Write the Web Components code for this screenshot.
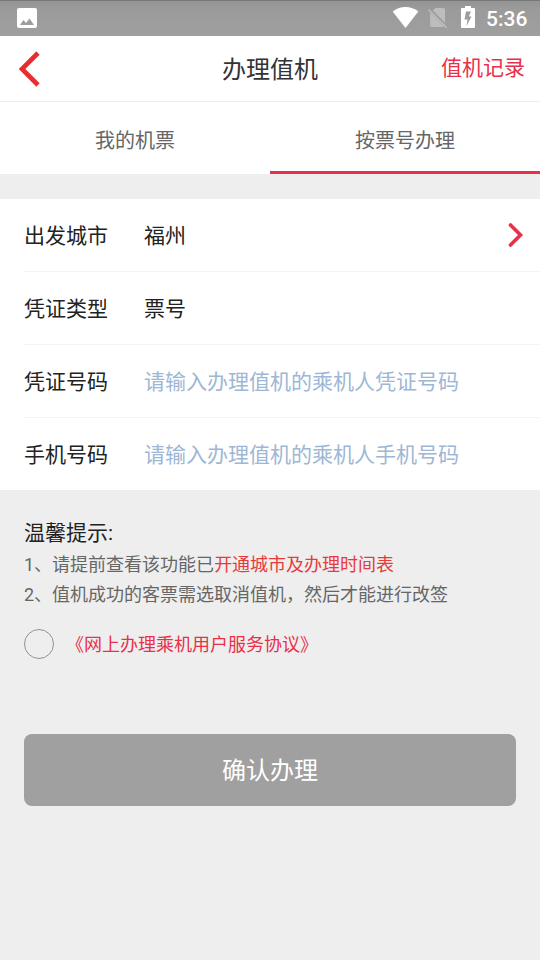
<!DOCTYPE html>
<html lang="zh-CN">
<head>
<meta charset="utf-8">
<title>办理值机</title>
<style>
html,body{margin:0;height:100%}
body{background:#eee;font-family:Roboto,"Noto Sans CJK SC",sans-serif;overflow:hidden}
</style>
</head>
<body>
<checkin-app></checkin-app>
<script>
function define(name, html) {
  const t = document.createElement('template');
  t.innerHTML = html;
  customElements.define(name, class extends HTMLElement {
    constructor() {
      super();
      this.attachShadow({ mode: 'open' }).appendChild(t.content.cloneNode(true));
    }
  });
}

define('status-bar', `
<style>
:host{display:flex;box-sizing:border-box;height:36px;padding:0 12px 0 17px;align-items:center;background:linear-gradient(#777 0,#777 1px,#949494 1px,#9b9b9b 10px,#9f9f9f 36px);color:#fff}
svg{display:block;flex:none}
.gap{flex:1}
.wifi{margin-right:9px}.sim{margin-right:13px}.bat{margin-right:11px}
span{font:500 21px/36px Roboto,sans-serif;padding-top:1px;width:42px;white-space:nowrap}
</style>
<svg width="20" height="36" viewBox="0 0 20 36"><path fill="#fff" fill-rule="evenodd" d="M2 8h16a2 2 0 0 1 2 2v16a2 2 0 0 1-2 2H2a2 2 0 0 1-2-2V10a2 2 0 0 1 2-2zM3 25h14l-4.500-6.500-3.500 4.500-2.500-3z"/></svg>
<div class="gap"></div>
<svg class="wifi" width="26" height="36" viewBox="0 0 26 36"><path fill="#fff" d="M-.3 11.500C6.500 5.500 18.500 5.500 25.300 11.500L12.500 28z"/></svg>
<svg class="sim" width="20" height="36" viewBox="0 0 20 36"><path fill="#bdbdbd" d="M7.500 8H15.500q1.500 0 1.500 1.500V23L5 10.500zM2.200 12.500L16.500 27H3.700q-1.500 0-1.500-1.500z"/><path stroke="#bdbdbd" stroke-width="1.500" d="M.5 9.500L18.700 27.700"/></svg>
<svg class="bat" width="14" height="36" viewBox="0 0 14 36"><path fill="#fff" fill-rule="evenodd" d="M4 6h6v2h3q1 0 1 1v18q0 1-1 1H1q-1 0-1-1V9q0-1 1-1h3zM5 11.500L3.500 19.500H6.500L5.500 26L10.500 16.500H7.800L10 11.500z"/></svg>
<span>5:36</span>`);

define('nav-header', `
<style>
:host{display:grid;grid-template-columns:1fr auto 1fr;align-items:center;box-sizing:border-box;height:66px;padding:0 15px 0 18px;background:#fff;border-bottom:1px solid #ededed}
svg{display:block}
h1{margin:0;padding-top:3px;font-weight:400;font-size:24px;line-height:36px;color:#333;transform:translateX(-1.500px)}
::slotted(a){justify-self:end;font-size:21px;line-height:30px;color:#e8304a;margin-bottom:2px}
</style>
<svg width="24" height="36" viewBox="0 0 24 36"><path d="M20 2L4 18L20 34" fill="none" stroke="#e72d2d" stroke-width="4.600"/></svg>
<h1>办理值机</h1><slot></slot>`);

define('tab-item', `
<style>
:host{display:flex;flex:1;box-sizing:border-box;justify-content:center;align-items:center;padding-top:8px;border-bottom:3px solid transparent;font-size:20px;line-height:30px;color:#666}
:host([active]){border-color:#e8304a}
</style><slot></slot>`);

define('tab-bar', `<style>:host{display:flex;height:72px;background:#fff}</style><slot></slot>`);

define('form-row', `
<style>
:host{display:flex;align-items:center;box-sizing:border-box;height:73px;margin-left:24px;padding:0 16px 0 0;border-bottom:1px solid #f0f3f7;font-size:21px;line-height:30px;color:#222}
:host(:last-child){height:72px;border:0}
.label,.value{padding-top:2px}
.label{width:120px}.value{flex:1}
:host([placeholder]) .value{color:#9db7d5}
svg{display:none}
:host([arrow]) svg{display:block}
</style>
<div class="label"><slot name="label"></slot></div><div class="value"><slot></slot></div>
<svg width="16" height="26" viewBox="0 0 16 26"><path d="M2.500 3L12.500 13L2.500 23" fill="none" stroke="#e8304a" stroke-width="3.600" stroke-linecap="round"/></svg>`);

define('form-list', `<style>:host{display:block;margin-top:25px;background:#fff}</style><slot></slot>`);

define('tips-note', `
<style>
:host{display:block;padding:26px 24px 0;font-size:18px;line-height:30px;color:#666}
h2{margin:0;font-weight:400;font-size:21px;line-height:34px;color:#222}
p{margin:0;white-space:nowrap}b{font-weight:400;color:#e73a3a}
</style>
<h2>温馨提示:</h2>
<p>1、请提前查看该功能已<b>开通城市及办理时间表</b></p>
<p>2、值机成功的客票需选取消值机，然后才能进行改签</p>`);

define('agreement-check', `
<style>
:host{display:flex;align-items:center;gap:12px;margin:19px 24px 0;height:30px;font-size:18px;line-height:30px;color:#e8304a}
i{box-sizing:border-box;width:30px;height:30px;border:1px solid #929292;border-radius:50%}
span{padding-top:2px}
</style><i></i><span><slot></slot></span>`);

define('submit-button', `
<style>
:host{display:block;margin:75px 24px 0}
button{display:block;width:100%;height:72px;padding:0 0 3px;border:0;border-radius:8px;background:#a0a0a0;color:#fff;font:inherit;font-size:24px}
</style><button><slot></slot></button>`);

define('checkin-app', `
<style>:host{display:flex;flex-direction:column;width:540px;height:960px;background:#eee}</style>
<status-bar></status-bar>
<nav-header><a>值机记录</a></nav-header>
<tab-bar><tab-item>我的机票</tab-item><tab-item active>按票号办理</tab-item></tab-bar>
<form-list>
<form-row arrow><span slot="label">出发城市</span>福州</form-row>
<form-row><span slot="label">凭证类型</span>票号</form-row>
<form-row placeholder><span slot="label">凭证号码</span>请输入办理值机的乘机人凭证号码</form-row>
<form-row placeholder><span slot="label">手机号码</span>请输入办理值机的乘机人手机号码</form-row>
</form-list>
<tips-note></tips-note>
<agreement-check>《网上办理乘机用户服务协议》</agreement-check>
<submit-button>确认办理</submit-button>`);
</script>
</body>
</html>
